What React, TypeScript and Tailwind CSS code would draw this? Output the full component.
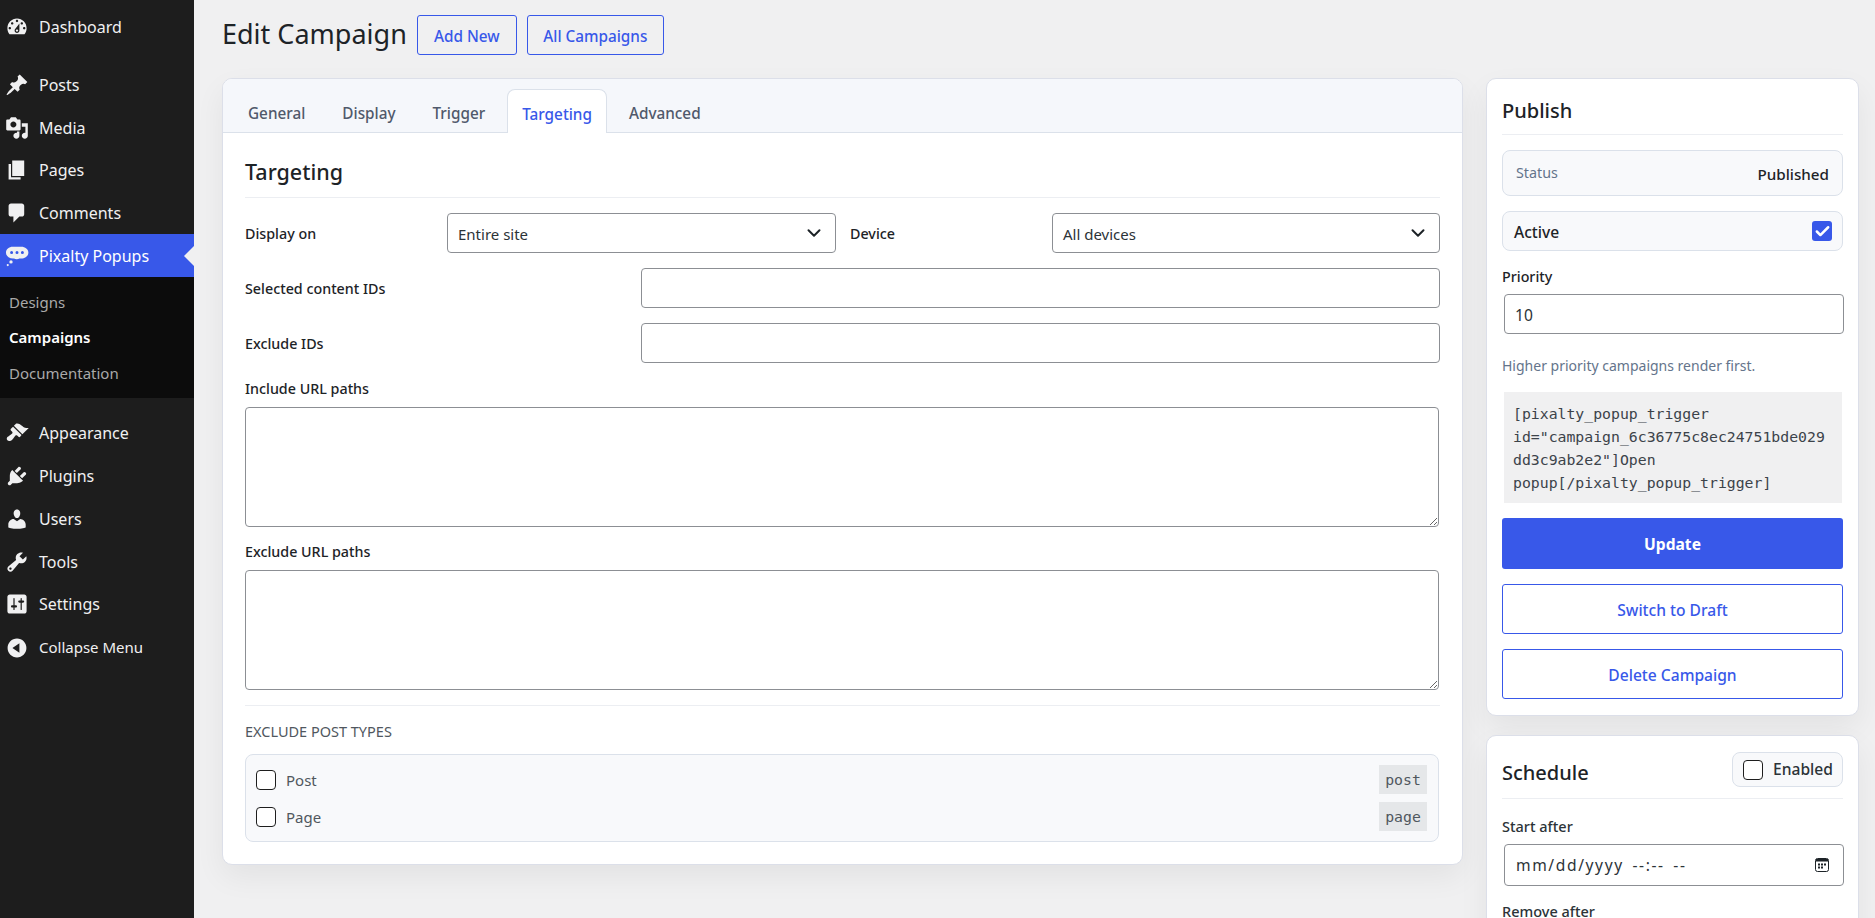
import { Check, ChevronDown } from "lucide-react";

const icons = {
  dashboard:
    "M3.76 16h12.48c1.1-1.37 1.76-3.11 1.76-5 0-4.42-3.58-8-8-8s-8 3.58-8 8c0 1.89.66 3.63 1.76 5zM10 4c.55 0 1 .45 1 1s-.45 1-1 1-1-.45-1-1 .45-1 1-1zM6 6c.55 0 1 .45 1 1s-.45 1-1 1-1-.45-1-1 .45-1 1-1zm8 0c.55 0 1 .45 1 1s-.45 1-1 1-1-.45-1-1 .45-1 1-1zm-5.37 5.55L12 7v6c0 1.1-.9 2-2 2s-2-.9-2-2c0-.57.24-1.08.63-1.45zM4 10c.55 0 1 .45 1 1s-.45 1-1 1-1-.45-1-1 .45-1 1-1zm12 0c.55 0 1 .45 1 1s-.45 1-1 1-1-.45-1-1 .45-1 1-1zm-5 3c0-.55-.45-1-1-1s-1 .45-1 1 .45 1 1 1 1-.45 1-1z",
  posts:
    "M10.44 3.02l1.82-1.82 6.36 6.35-1.83 1.82c-1.05-.68-2.48-.57-3.41.36l-.75.75c-.92.93-1.04 2.35-.35 3.41l-1.83 1.82-2.41-2.41-2.8 2.79c-.42.42-3.38 2.71-3.8 2.29s1.86-3.39 2.28-3.81l2.79-2.79L4.1 9.36l1.83-1.82c1.05.69 2.48.57 3.4-.36l.75-.75c.93-.92 1.05-2.35.36-3.41z",
  media:
    "M13 11V4c0-.55-.45-1-1-1h-1.67L9 1H5L3.67 3H2c-.55 0-1 .45-1 1v7c0 .55.45 1 1 1h10c.55 0 1-.45 1-1zM7 4.5c1.38 0 2.5 1.12 2.5 2.5S8.38 9.5 7 9.5 4.5 8.38 4.5 7 5.62 4.5 7 4.5zM14 6h5v10.5c0 1.38-1.12 2.5-2.5 2.5S14 17.88 14 16.5s1.12-2.5 2.5-2.5c.17 0 .34.02.5.05V9h-3V6zm-4 8.05V13h2v3.5c0 1.38-1.12 2.5-2.5 2.5S7 17.88 7 16.5 8.12 14 9.5 14c.17 0 .34.02.5.05z",
  pages: "M6 15V2h10v13H6zm-1 1h8v2H3V5h2v11z",
  comments: "M5 2h9c1.1 0 2 .9 2 2v7c0 1.1-.9 2-2 2h-2l-5 5v-5H5c-1.1 0-2-.9-2-2V4c0-1.1.9-2 2-2z",
  popups:
    "M6.5 2.2h7c3.300 0 6 2.100 6 5 0 2.800-2.700 4.900-6 4.900-.5 0-1 0-1.500-.1-1.200.9-3.300.9-4.500 0-.3 0-.5.1-.8.1C3.400 12.100.8 10 .8 7.200c0-2.900 2.500-5 5.700-5zM5.500 5.900a1.250 1.250 0 1 0 0 2.500 1.250 1.250 0 0 0 0-2.500zm4.500 0a1.250 1.250 0 1 0 0 2.500 1.250 1.250 0 0 0 0-2.500zm4.500 0a1.250 1.250 0 1 0 0 2.500 1.250 1.250 0 0 0 0-2.500zM5 13.500a1.400 1.400 0 1 1 0 2.800 1.400 1.400 0 0 1 0-2.800zM2.300 16.700a.9.9 0 1 1 0 1.800.9.9 0 0 1 0-1.800z",
  appearance:
    "M14.48 11.06L7.41 3.99l1.5-1.5c.5-.56 2.3-.47 3.51.32 1.21.8 1.43 1.28 2.91 2.1 1.18.64 2.45 1.26 4.45.85zm-.71.71L6.7 4.7 4.93 6.47c-.39.39-.39 1.02 0 1.41l1.06 1.06c.39.39.39 1.03 0 1.42-.6.6-1.43 1.11-2.21 1.69-.35.26-.7.53-1.01.84C1.43 13.23.99 15.1 2 16.11c1.01 1.01 2.88.57 4.22-.77.31-.31.58-.66.84-1.01.58-.78 1.09-1.61 1.69-2.21.39-.39 1.02-.39 1.41 0l1.06 1.06c.39.39 1.02.39 1.41 0z",
  plugins:
    "M13.11 4.36L9.87 7.6 8 5.73l3.24-3.24c.35-.34 1.05-.2 1.56.32.52.51.66 1.21.31 1.55zm-8 1.77l.91-1.12 9.01 9.01-1.19.84c-.71.71-2.63 1.16-3.82 1.16H6.14L4.9 17.26c-.59.59-1.54.59-2.12 0-.59-.58-.59-1.53 0-2.12l1.24-1.24v-3.88c0-1.13.4-3.19 1.09-3.89zm7.26 3.97l3.24-3.24c.34-.35 1.04-.21 1.55.31.52.51.66 1.21.31 1.55l-3.24 3.25z",
  users:
    "M10 9.25c-2.27 0-2.73-3.44-2.73-3.44C7 4.02 7.82 2 9.97 2c2.16 0 2.98 2.02 2.71 3.81 0 0-.41 3.44-2.68 3.44zm0 2.57L12.72 10c2.39 0 4.52 2.33 4.52 4.53v2.49s-3.65 1.13-7.24 1.13c-3.65 0-7.24-1.13-7.24-1.13v-2.49c0-2.25 1.94-4.48 4.47-4.48z",
  tools:
    "M16.68 9.77c-1.34 1.34-3.3 1.67-4.95.99l-5.41 6.52c-.99.99-2.59.99-3.58 0s-.99-2.59 0-3.57l6.52-5.42c-.68-1.65-.35-3.61.99-4.95 1.28-1.28 3.12-1.62 4.72-1.06l-2.89 2.89 2.82 2.82 2.86-2.87c.53 1.58.18 3.39-1.08 4.65zM3.81 16.21c.4.39 1.04.39 1.43 0 .4-.4.4-1.04 0-1.43-.39-.4-1.03-.4-1.43 0-.39.39-.39 1.03 0 1.43z",
  settings:
    "M18 16V4c0-1.1-.9-2-2-2H4c-1.1 0-2 .9-2 2v12c0 1.1.9 2 2 2h12c1.1 0 2-.9 2-2zM8 11h1c.55 0 1 .45 1 1s-.45 1-1 1H8v1.5c0 .28-.22.5-.5.5s-.5-.22-.5-.5V13H6c-.55 0-1-.45-1-1s.45-1 1-1h1V5.5c0-.28.22-.5.5-.5s.5.22.5.5V11zm5-2h-1c-.55 0-1-.45-1-1s.45-1 1-1h1V5.5c0-.28.22-.5.5-.5s.5.22.5.5V7h1c.55 0 1 .45 1 1s-.45 1-1 1h-1v5.5c0 .28-.22.5-.5.5s-.5-.22-.5-.5V9z",
  collapse: "M10 2.16c4.33 0 7.84 3.51 7.84 7.84s-3.51 7.84-7.84 7.84S2.16 14.33 2.16 10 5.71 2.16 10 2.16zm2 11.72V6.12L6.18 9.97z",
};

function MenuIcon({ d }: { d: string }) {
  return (
    <svg viewBox="0 0 20 20" className="h-6 w-6 shrink-0 fill-[#f0f0f1]">
      <path d={d} fillRule="evenodd" />
    </svg>
  );
}

function MenuItem({ icon, label, active }: { icon: string; label: string; active?: boolean }) {
  return (
    <div className={`relative flex h-[42.7px] items-center gap-[10px] pl-[5px] text-[16px] text-[#f0f0f1] ${active ? "bg-[#3858e9] text-white" : ""}`}>
      <MenuIcon d={icon} />
      <span>{label}</span>
      {active && (
        <span className="absolute right-0 top-1/2 h-0 w-0 -translate-y-1/2 border-y-[10px] border-r-[10px] border-y-transparent border-r-[#f0f0f1]" />
      )}
    </div>
  );
}

function Sidebar() {
  return (
    <aside className="h-full w-[194px] shrink-0 bg-[#1d1d1d] pt-[6px]">
      <MenuItem icon={icons.dashboard} label="Dashboard" />
      <div className="h-[15px]" />
      <MenuItem icon={icons.posts} label="Posts" />
      <MenuItem icon={icons.media} label="Media" />
      <MenuItem icon={icons.pages} label="Pages" />
      <MenuItem icon={icons.comments} label="Comments" />
      <MenuItem icon={icons.popups} label="Pixalty Popups" active />
      <div className="flex h-[121px] flex-col bg-[#0c0c0c] pl-[9px] pt-[7px] text-[15px]">
        <span className="flex h-[36px] items-center text-[#a9a9a9]">Designs</span>
        <span className="flex h-[35px] items-center font-semibold text-white">Campaigns</span>
        <span className="flex h-[36px] items-center text-[#a9a9a9]">Documentation</span>
      </div>
      <div className="h-[14px]" />
      <MenuItem icon={icons.appearance} label="Appearance" />
      <MenuItem icon={icons.plugins} label="Plugins" />
      <MenuItem icon={icons.users} label="Users" />
      <MenuItem icon={icons.tools} label="Tools" />
      <MenuItem icon={icons.settings} label="Settings" />
      <div className="flex h-[44px] items-center gap-[10px] pl-[5px] text-[15px] text-[#f0f0f1]">
        <MenuIcon d={icons.collapse} />
        <span>Collapse Menu</span>
      </div>
    </aside>
  );
}

const control = "rounded-[4px] border border-[#8c8f94] bg-white text-[15.6px] text-[#2c3338]";
const fieldLabel = "text-[14.3px] font-medium text-[#1d2327]";

function SelectBox({ value, width }: { value: string; width: string }) {
  return (
    <div className={`${control} ${width} flex h-[40px] items-center justify-between pl-[10px] pr-[10px]`}>
      <span className="pt-[3px] text-[15px]">{value}</span>
      <ChevronDown size={22} strokeWidth={2.2} className="text-[#1d2327]" />
    </div>
  );
}

function Box() {
  return <span className="block h-5 w-5 shrink-0 rounded-[4px] border border-[#1e1e1e] bg-white" />;
}

function IdRow({ label }: { label: string }) {
  return (
    <div className="mt-[15px] flex h-[40px] items-center">
      <label className={`w-[396px] pt-[2px] ${fieldLabel}`}>{label}</label>
      <input className={`${control} h-[40px] w-[799px]`} />
    </div>
  );
}

function PostType({ label, slug }: { label: string; slug: string }) {
  return (
    <div className="flex h-[29px] items-center justify-between">
      <div className="flex items-center gap-[10px] text-[15px] text-[#50575e]">
        <Box />
        <span className="pt-[2px]">{label}</span>
      </div>
      <code className="flex h-[29px] w-[48px] items-center justify-center bg-[#e5e7e9] pt-[2px] font-['DejaVu_Sans_Mono',monospace] text-[14.8px] text-[#50575e]">
        {slug}
      </code>
    </div>
  );
}

function MainCard() {
  return (
    <section className="h-[787px] w-[1241px] overflow-hidden rounded-[10px] border border-[#dcdfe9] bg-white shadow-[0_12px_30px_rgba(0,0,0,0.06)]">
      <div className="flex h-[54px] items-end gap-[6px] border-b border-[#dbe1ea] bg-[#f5f7fb] pl-[9.5px] text-[15.3px] font-medium text-[#50596b]">
        <span className="flex h-[43px] items-center px-[15.5px] pt-[5px]">General</span>
        <span className="flex h-[43px] items-center px-[15.5px] pt-[5px]">Display</span>
        <span className="flex h-[43px] items-center px-[15.5px] pt-[5px]">Trigger</span>
        <span className="-mb-px flex h-[44px] items-center rounded-t-[8px] border border-b-0 border-[#dbe1ea] bg-white px-[14.5px] pt-[5px] text-[#3858e9]">
          Targeting
        </span>
        <span className="flex h-[43px] items-center px-[15.5px] pt-[5px]">Advanced</span>
      </div>
      <div className="px-[22px] pt-[20px]">
        <h2 className="h-[45px] border-b border-[#eceef2] text-[21.5px] font-medium leading-[38px] text-[#1d2327]">Targeting</h2>
        <div className="mt-[15px] flex items-center">
          <label className={`w-[202px] pt-[2px] ${fieldLabel}`}>Display on</label>
          <SelectBox value="Entire site" width="w-[389px]" />
          <label className={`ml-[14px] w-[202px] pt-[2px] ${fieldLabel}`}>Device</label>
          <SelectBox value="All devices" width="w-[388px]" />
        </div>
        <IdRow label="Selected content IDs" />
        <IdRow label="Exclude IDs" />
        <label className={`mt-[15px] block h-[28px] leading-[22px] ${fieldLabel}`}>Include URL paths</label>
        <textarea className={`${control} mt-px block h-[120px] w-[1194px]`} />
        <label className={`mt-[14px] block h-[29px] leading-[22px] ${fieldLabel}`}>Exclude URL paths</label>
        <textarea className={`${control} block h-[120px] w-[1194px]`} />
        <div className="mt-[15px] border-t border-[#eceef2] pt-[14px] text-[14.5px] uppercase leading-[22px] text-[#50575e]">Exclude post types</div>
        <div className="mt-[12px] flex h-[88px] w-[1194px] flex-col gap-[8px] rounded-[8px] border border-[#dbe1ea] bg-[#f8f9fb] pb-[10px] pl-[10px] pr-[11px] pt-[10px]">
          <PostType label="Post" slug="post" />
          <PostType label="Page" slug="page" />
        </div>
      </div>
    </section>
  );
}

function OutlineButton({ label }: { label: string }) {
  return (
    <button className="mt-[15px] block h-[50px] w-full rounded-[3px] border border-[#3858e9] bg-white pt-[3px] text-[15.6px] font-medium text-[#3858e9]">
      {label}
    </button>
  );
}

function PublishCard() {
  return (
    <section className="h-[638px] rounded-[10px] border border-[#dcdfe9] bg-white px-[15px] pt-[16px] shadow-[0_12px_30px_rgba(0,0,0,0.06)]">
      <h2 className="h-[40px] border-b border-[#eceef2] text-[20px] font-medium leading-[32px] text-[#1d2327]">Publish</h2>
      <div className="mt-[15px] flex h-[46px] items-center justify-between rounded-[8px] border border-[#dbe1ea] bg-[#f8f9fb] px-[13px]">
        <span className="text-[14.3px] text-[#64748b]">Status</span>
        <span className="pt-[2px] text-[15.2px] font-medium text-[#1d2327]">Published</span>
      </div>
      <div className="mt-[15px] flex h-[40px] items-center justify-between rounded-[8px] border border-[#dbe1ea] bg-[#f8f9fb] pl-[11px] pr-[10px] text-[15.6px] font-medium text-[#1d2327]">
        <span className="pt-[3px]">Active</span>
        <span className="flex h-5 w-5 items-center justify-center rounded-[3px] bg-[#3858e9] text-white">
          <Check size={17} strokeWidth={3.5} />
        </span>
      </div>
      <label className={`mt-[15px] block h-[28px] leading-[22px] ${fieldLabel}`}>Priority</label>
      <input readOnly value="10" className={`${control} ml-[2px] block h-[40px] w-[340px] px-[10px] pt-[2px]`} />
      <p className="mt-[21px] h-[37px] text-[14px] leading-[22px] text-[#64748b]">Higher priority campaigns render first.</p>
      <code className="ml-[2px] block h-[111px] w-[338px] bg-[#f0f0f1] px-[9px] pt-[10px] font-['DejaVu_Sans_Mono',monospace] text-[14.8px] leading-[23px] text-[#3c434a]">
        [pixalty_popup_trigger
        <br />
        id="campaign_6c36775c8ec24751bde029
        <br />
        dd3c9ab2e2"]Open
        <br />
        popup[/pixalty_popup_trigger]
      </code>
      <button className="mt-[15px] block h-[51px] w-full rounded-[3px] bg-[#3858e9] pt-[3px] text-[15.6px] font-bold text-white">Update</button>
      <OutlineButton label="Switch to Draft" />
      <OutlineButton label="Delete Campaign" />
    </section>
  );
}

function CalendarIcon() {
  return (
    <svg viewBox="0 0 14 14" className="h-[14px] w-[14px] text-[#1d2327]">
      <rect x="0.5" y="0.5" width="13" height="13" rx="2" fill="none" stroke="currentColor" />
      <rect x="1" y="1" width="12" height="2.5" fill="currentColor" />
      <path d="M3 5.500h2v2H3zM6 5.500h2v2H6zM9 5.500h2v2H9zM3 8.500h2v2H3zM6 8.500h2v2H6z" fill="currentColor" />
    </svg>
  );
}

function ScheduleCard() {
  return (
    <section className="mt-[19px] h-[300px] rounded-[10px] border border-[#dcdfe9] bg-white px-[15px] pt-[16px] shadow-[0_12px_30px_rgba(0,0,0,0.06)]">
      <div className="flex h-[47px] items-start justify-between border-b border-[#eceef2]">
        <h2 className="pt-[1px] text-[20px] font-medium leading-[40px] text-[#1d2327]">Schedule</h2>
        <div className="flex h-[35px] w-[111px] items-center gap-[10px] rounded-[8px] border border-[#dbe1ea] bg-[#f8f9fb] pl-[10px] text-[15.6px] font-medium text-[#2c3338]">
          <Box />
          <span>Enabled</span>
        </div>
      </div>
      <label className="mt-[16px] block h-[29px] text-[14.5px] font-medium leading-[22px] text-[#2c3338]">Start after</label>
      <div className={`${control} ml-[2px] flex h-[42px] w-[340px] items-center justify-between pl-[11px] pr-[14px]`}>
        <span className="pt-[2px] tracking-[1.6px] [word-spacing:3px]">mm/dd/yyyy --:-- --</span>
        <CalendarIcon />
      </div>
      <label className="mt-[14px] block text-[14.5px] font-medium leading-[22px] text-[#2c3338]">Remove after</label>
    </section>
  );
}

export default function App() {
  return (
    <div className="flex h-[918px] overflow-hidden bg-[#f0f0f1] font-['Noto_Sans',sans-serif]">
      <Sidebar />
      <main className="min-w-0 flex-1 pl-[28px]">
        <header className="flex h-[78px] items-start gap-[10px] pt-[15px]">
          <h1 className="-mt-px text-[27px] leading-[40px] text-[#1d2327]">Edit Campaign</h1>
          <button className="h-[40px] w-[100px] rounded-[3px] border border-[#3858e9] pt-[2px] text-[15.3px] font-medium text-[#3858e9]">Add New</button>
          <button className="h-[40px] w-[137px] rounded-[3px] border border-[#3858e9] pt-[2px] text-[15.3px] font-medium text-[#3858e9]">All Campaigns</button>
        </header>
        <div className="flex items-start gap-[23px]">
          <MainCard />
          <div className="w-[373px] shrink-0">
            <PublishCard />
            <ScheduleCard />
          </div>
        </div>
      </main>
    </div>
  );
}
